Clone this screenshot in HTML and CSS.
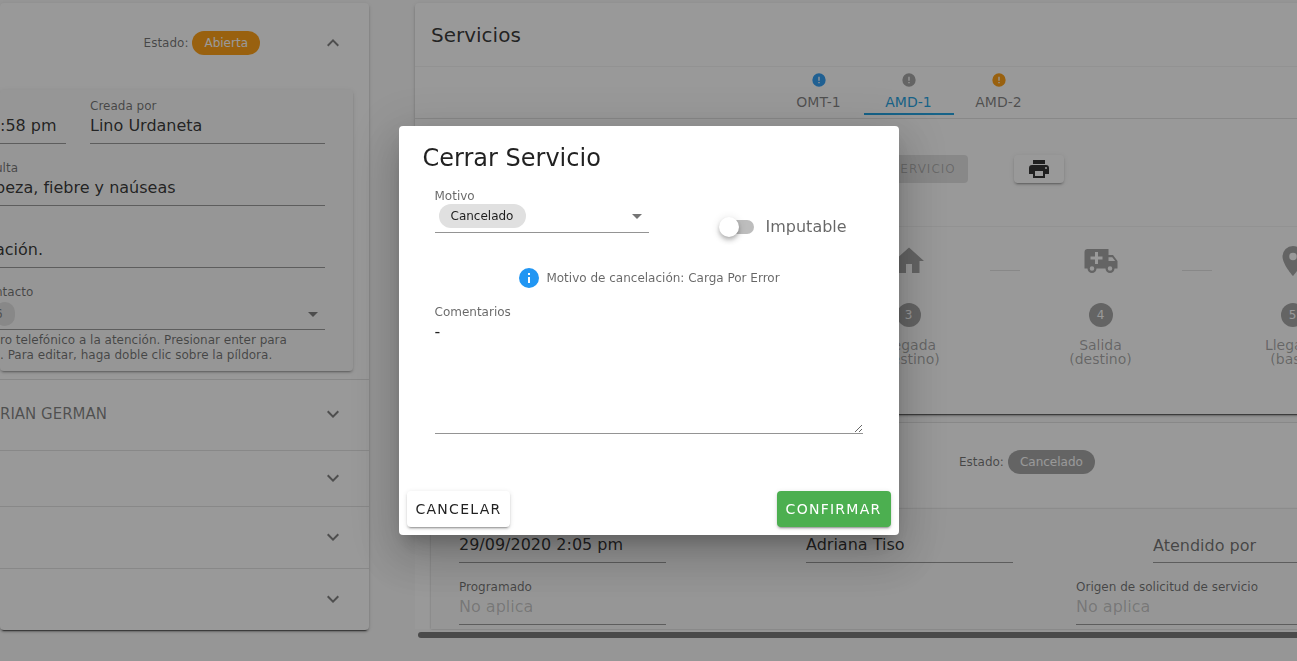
FILE: index.html
```html
<!DOCTYPE html>
<html lang="es">
<head>
<meta charset="utf-8">
<title>Cerrar Servicio</title>
<link rel="stylesheet" href="styles.css">
</head>
<body>
<svg class="sprite" aria-hidden="true">
  <symbol id="up" viewBox="0 0 24 24"><path d="M7.41,15.41L12,10.83L16.59,15.41L18,14L12,8L6,14L7.41,15.41Z"/></symbol>
  <symbol id="down" viewBox="0 0 24 24"><path d="M7.41,8.58L12,13.17L16.59,8.58L18,10L12,16L6,10L7.41,8.58Z"/></symbol>
  <symbol id="menu" viewBox="0 0 24 24"><path d="M7,10L12,15L17,10H7Z"/></symbol>
  <symbol id="alert" viewBox="0 0 24 24"><path d="M13,13H11V7H13M13,17H11V15H13M12,2A10,10 0 0,0 2,12A10,10 0 0,0 12,22A10,10 0 0,0 22,12A10,10 0 0,0 12,2Z"/></symbol>
  <symbol id="info" viewBox="0 0 24 24"><path d="M13,9H11V7H13M13,17H11V11H13M12,2A10,10 0 0,0 2,12A10,10 0 0,0 12,22A10,10 0 0,0 22,12A10,10 0 0,0 12,2Z"/></symbol>
  <symbol id="printer" viewBox="0 0 24 24"><path d="M18,3H6V7H18M19,12A1,1 0 0,1 18,11A1,1 0 0,1 19,10A1,1 0 0,1 20,11A1,1 0 0,1 19,12M16,19H8V14H16M19,8H5A3,3 0 0,0 2,11V17H6V21H18V17H22V11A3,3 0 0,0 19,8Z"/></symbol>
  <symbol id="home" viewBox="0 0 24 24"><path d="M10,20V14H14V20H19V12H22L12,3L2,12H5V20H10Z"/></symbol>
  <symbol id="ambulance" viewBox="0 0 24 24"><path d="M18,18.5A1.5,1.5 0 0,0 19.5,17A1.5,1.5 0 0,0 18,15.5A1.5,1.5 0 0,0 16.5,17A1.5,1.5 0 0,0 18,18.5M19.5,9.5H17V12H21.46L19.5,9.5M6,18.5A1.5,1.5 0 0,0 7.5,17A1.5,1.5 0 0,0 6,15.5A1.5,1.5 0 0,0 4.5,17A1.5,1.5 0 0,0 6,18.5M20,8L23,12V17H21A3,3 0 0,1 18,20A3,3 0 0,1 15,17H9A3,3 0 0,1 6,20A3,3 0 0,1 3,17H1V6C1,4.89 1.89,4 3,4H17V8H20M8,6V9H5V11H8V14H10V11H13V9H10V6H8Z"/></symbol>
  <symbol id="pin" viewBox="0 0 24 24"><path d="M12,11.5A2.5,2.5 0 0,1 9.5,9A2.5,2.5 0 0,1 12,6.5A2.5,2.5 0 0,1 14.5,9A2.5,2.5 0 0,1 12,11.5M12,2A7,7 0 0,0 5,9C5,14.25 12,22 12,22C12,22 19,14.25 19,9A7,7 0 0,0 12,2Z"/></symbol>
</svg>

<div class="page">
  <aside class="side card">
    <header class="side-head">
      <span class="state">Estado: <span class="chip chip-orange">Abierta</span></span>
      <button class="toggle" aria-label="Contraer"><svg class="icon"><use href="#up"/></svg></button>
    </header>
    <div class="details">
      <div class="pair">
        <div class="field">
          <label class="label" for="hora"></label>
          <input class="value" id="hora" aria-label="Hora" value=":58 pm" readonly>
        </div>
        <div class="field">
          <label class="label" for="creada">Creada por</label>
          <input class="value" id="creada" value="Lino Urdaneta" readonly>
        </div>
      </div>
      <div class="field bleed">
        <label class="label" for="consulta">ulta</label>
        <input class="value" id="consulta" value="beza, fiebre y naúseas" readonly>
      </div>
      <div class="field bleed">
        <label class="label" for="nota"></label>
        <input class="value" id="nota" aria-label="Atención" value="ación." readonly>
      </div>
      <div class="field bleed">
        <span class="label">ntacto</span>
        <div class="pick">
          <span class="chip chip-cut">6</span>
          <svg class="icon"><use href="#menu"/></svg>
        </div>
      </div>
      <p class="hint">ro telefónico a la atención. Presionar enter para<br>. Para editar, haga doble clic sobre la píldora.</p>
    </div>
    <button class="fold fold-tall"><span>RIAN GERMAN</span><svg class="icon"><use href="#down"/></svg></button>
    <button class="fold" aria-label="Expandir"><svg class="icon"><use href="#down"/></svg></button>
    <button class="fold fold-mid" aria-label="Expandir"><svg class="icon"><use href="#down"/></svg></button>
    <button class="fold fold-mid" aria-label="Expandir"><svg class="icon"><use href="#down"/></svg></button>
  </aside>

  <main class="main">
    <section class="card">
      <h2 class="section-title">Servicios</h2>
      <nav class="tabs">
        <button class="tab"><svg class="icon blue"><use href="#alert"/></svg>OMT-1</button>
        <button class="tab active"><svg class="icon grey"><use href="#alert"/></svg>AMD-1</button>
        <button class="tab"><svg class="icon orange"><use href="#alert"/></svg>AMD-2</button>
      </nav>
      <div class="tools">
        <button class="tool-close" disabled>CERRAR SERVICIO</button>
        <button class="tool-print" aria-label="Imprimir"><svg class="icon"><use href="#printer"/></svg></button>
      </div>
      <ol class="steps">
        <li class="step"></li>
        <li class="link"></li>
        <li class="step"></li>
        <li class="link"></li>
        <li class="step"><svg class="icon"><use href="#home"/></svg><span class="num">3</span><span>Llegada<br>(destino)</span></li>
        <li class="link"></li>
        <li class="step"><svg class="icon"><use href="#ambulance"/></svg><span class="num">4</span><span>Salida<br>(destino)</span></li>
        <li class="link"></li>
        <li class="step"><svg class="icon"><use href="#pin"/></svg><span class="num">5</span><span>Llegada<br>(base)</span></li>
      </ol>
    </section>
    <section class="service">
      <header class="service-head">
        <span class="state">Estado: <span class="chip chip-grey">Cancelado</span></span>
      </header>
      <div class="service-body">
        <div class="row">
          <div class="field short">
            <label class="label" for="fecha"></label>
            <input class="value" id="fecha" aria-label="Fecha" value="29/09/2020 2:05 pm" readonly>
          </div>
          <div class="field short">
            <label class="label" for="por"></label>
            <input class="value" id="por" aria-label="Creado por" value="Adriana Tiso" readonly>
          </div>
          <div class="field short">
            <label class="label"></label>
            <input class="value empty" aria-label="Atendido por" placeholder="Atendido por" readonly>
          </div>
        </div>
        <div class="row">
          <div class="field short">
            <label class="label" for="programado">Programado</label>
            <input class="value" id="programado" placeholder="No aplica" readonly>
          </div>
          <div class="field long">
            <label class="label" for="origen">Origen de solicitud de servicio</label>
            <input class="value" id="origen" placeholder="No aplica" readonly>
          </div>
        </div>
      </div>
    </section>
    <div class="scrollbar"></div>
  </main>
</div>

<div class="overlay">
  <form class="dialog" role="dialog" aria-labelledby="titulo">
    <h1 class="dialog-title" id="titulo">Cerrar Servicio</h1>
    <div class="dialog-body">
      <div class="choices">
        <div class="field motive">
          <label class="label" for="motivo">Motivo</label>
          <div class="pick">
            <select class="chip" id="motivo"><option>Cancelado</option></select>
            <svg class="icon"><use href="#menu"/></svg>
          </div>
        </div>
        <label class="switch"><input type="checkbox">Imputable</label>
      </div>
      <p class="notice"><svg class="icon"><use href="#info"/></svg>Motivo de cancelación: Carga Por Error</p>
      <div class="field">
        <label class="label" for="comentarios">Comentarios</label>
        <textarea class="comments" id="comentarios">-</textarea>
      </div>
    </div>
    <footer class="actions">
      <button class="btn" type="button">CANCELAR</button>
      <button class="btn btn-green" type="button">CONFIRMAR</button>
    </footer>
  </form>
</div>
</body>
</html>
```
FILE: styles.css
```css
* { box-sizing: border-box; }
body, h1, h2, p, ol { margin: 0; padding: 0; }
body {
  height: 100vh;
  overflow: hidden;
  background: #fafafa;
  color: rgba(0, 0, 0, .87);
  font: 16px/24px "DejaVu Sans", sans-serif;
}
button, input, select, textarea {
  margin: 0;
  padding: 0;
  border: 0;
  background: none;
  color: inherit;
  font: inherit;
  outline: 0;
}
.sprite { display: none; }
.icon {
  width: 24px;
  height: 24px;
  flex: none;
  fill: currentColor;
}

/* Page columns; the service column runs past the right edge */
.page {
  display: flex;
  align-items: flex-start;
  gap: 46px;
  width: calc(100% + 105px);
  padding-top: 3px;
}
.card {
  background: #fff;
  border-radius: 4px;
  box-shadow: 0 3px 1px -2px rgba(0, 0, 0, .6), 0 2px 2px rgba(0, 0, 0, .24), 0 1px 5px rgba(0, 0, 0, .12);
}
.side { flex: 0 0 369px; }
.side-head {
  display: flex;
  align-items: center;
  justify-content: flex-end;
  gap: 61px;
  height: 87px;
  padding: 0 24px 8px 0;
}
.toggle { height: 24px; color: rgba(0, 0, 0, .54); }
.state {
  display: flex;
  align-items: center;
  gap: 4px;
  font-size: 12px;
  color: rgba(0, 0, 0, .6);
}
.chip {
  height: 24px;
  padding: 0 12px;
  border-radius: 12px;
  background: #e0e0e0;
  font-size: 12px;
  line-height: 24px;
}
.chip-orange { background: #ff9800; color: #fff; }
.chip-grey { background: #9e9e9e; color: #fff; }
.chip-cut { color: rgba(0, 0, 0, .5); padding-left: 0; }

.details {
  display: flex;
  flex-direction: column;
  gap: 14px;
  margin: 0 16px 8px 0;
  padding: 6px 28px 8px 0;
  background: #fafafa;
  border-radius: 4px;
  box-shadow: 0 3px 1px -2px rgba(0, 0, 0, .2), 0 2px 2px rgba(0, 0, 0, .14), 0 1px 5px rgba(0, 0, 0, .12);
}
.pair {
  display: grid;
  grid-template-columns: 66px 1fr;
  gap: 24px;
}
.field { display: flex; flex-direction: column; min-width: 0; }
.bleed { margin-left: -5px; }
.label {
  height: 20px;
  font-size: 12px;
  line-height: 20px;
  color: rgba(0, 0, 0, .6);
}
.value {
  width: 100%;
  height: 28px;
  padding-bottom: 9px;
  border-bottom: 1px solid rgba(0, 0, 0, .42);
}
.value::placeholder { color: rgba(0, 0, 0, .24); }
.empty { padding-bottom: 6px; }
.empty::placeholder { color: rgba(0, 0, 0, .6); }
.pick {
  display: flex;
  align-items: flex-start;
  justify-content: space-between;
  height: 28px;
  border-bottom: 1px solid rgba(0, 0, 0, .42);
  color: rgba(0, 0, 0, .54);
}
.hint {
  margin-top: -11px;
  font-size: 12px;
  line-height: 15px;
  white-space: nowrap;
  color: rgba(0, 0, 0, .6);
}
.fold {
  display: flex;
  align-items: center;
  justify-content: flex-end;
  width: 100%;
  height: 56px;
  padding: 0 24px 2px 0;
  border-top: 1px solid rgba(0, 0, 0, .12);
  color: rgba(0, 0, 0, .54);
  font-size: 15px;
}
.fold span { margin-right: auto; }
.fold-tall { height: 71px; }
.fold-mid { height: 62px; }

/* Services */
.main { flex: 1; min-width: 0; }
.section-title {
  padding: 20px 16px 19px;
  font-size: 20px;
  font-weight: 400;
  border-bottom: 1px solid rgba(0, 0, 0, .05);
}
.tabs {
  display: flex;
  justify-content: center;
  height: 52px;
  border-bottom: 1px solid rgba(0, 0, 0, .12);
}
.tab {
  display: flex;
  flex-direction: column;
  align-items: center;
  gap: 2px;
  width: 90px;
  height: 48px;
  padding-top: 5px;
  color: rgba(0, 0, 0, .54);
  font-size: 14px;
}
.tab .icon { width: 16px; height: 16px; }
.active { color: #0f9be0; border-bottom: 2px solid; }
.blue { color: #2196f3; }
.grey { color: #9e9e9e; }
.orange { color: #ff9800; }
.tools {
  display: flex;
  justify-content: center;
  gap: 46px;
  height: 108px;
  padding: 36px 0 0 67px;
  border-bottom: 1px solid rgba(0, 0, 0, .05);
}
.tool-close, .tool-print {
  height: 28px;
  padding: 0 12px;
  border-radius: 4px;
  font-size: 12px;
}
.tool-close {
  background: rgba(0, 0, 0, .12);
  color: rgba(0, 0, 0, .26);
  letter-spacing: 1px;
}
.tool-print {
  display: flex;
  align-items: center;
  padding: 0 13px;
  box-shadow: 0 3px 1px -2px rgba(0, 0, 0, .2), 0 2px 2px rgba(0, 0, 0, .14), 0 1px 5px rgba(0, 0, 0, .12);
}
.steps {
  display: flex;
  justify-content: center;
  height: 187px;
  padding-top: 16px;
  list-style: none;
}
.step {
  display: flex;
  flex-direction: column;
  align-items: center;
  width: 162px;
  color: rgba(0, 0, 0, .38);
  font-size: 14px;
  line-height: 14px;
  text-align: center;
}
.step .icon { width: 36px; height: 36px; color: #9e9e9e; }
.link {
  width: 30px;
  height: 28px;
  border-bottom: 1px solid rgba(0, 0, 0, .12);
}
.num {
  width: 24px;
  margin: 24px 0 11px;
  border-radius: 12px;
  background: #9e9e9e;
  color: #fff;
  font-size: 12px;
  line-height: 24px;
}
.service {
  margin-top: 8px;
  background: #fff;
  border-top: 1px solid rgba(0, 0, 0, .12);
}
.service-head {
  display: flex;
  align-items: center;
  height: 86px;
  padding: 0 0 8px 544px;
}
.service-body {
  display: flex;
  flex-direction: column;
  gap: 14px;
  margin: 0 16px;
  padding: 6px 26px 4px 28px;
  background: #fafafa;
  box-shadow: 0 0 2px rgba(0, 0, 0, .3);
}
.row { display: flex; justify-content: space-between; }
.short { width: 207px; }
.long { width: 284px; }
.scrollbar {
  height: 6px;
  margin: 3px 0 0 3px;
  border-radius: 3px;
  background: #6d6d6d;
}

/* Dialog */
.overlay {
  position: fixed;
  inset: 0;
  display: flex;
  align-items: center;
  justify-content: center;
  background: rgba(33, 33, 33, .46);
}
.dialog {
  width: 500px;
  background: #fff;
  border-radius: 4px;
  box-shadow: 0 11px 15px -7px rgba(0, 0, 0, .2), 0 24px 38px 3px rgba(0, 0, 0, .14), 0 9px 46px 8px rgba(0, 0, 0, .12);
}
.dialog-title {
  padding: 16px 24px 12px;
  font-size: 24px;
  font-weight: 400;
  line-height: 32px;
}
.dialog-body { padding: 0 36px; }
.choices { display: flex; gap: 72px; }
.motive { width: 214px; }
.pick select { appearance: none; margin-left: 4px; color: rgba(0, 0, 0, .87); }
.choices .pick { height: 29px; }
.motive .label { height: 18px; line-height: 20px; }
.switch {
  display: flex;
  align-items: center;
  gap: 12px;
  height: 24px;
  margin-top: 29px;
  color: rgba(0, 0, 0, .6);
}
.switch input {
  appearance: none;
  display: flex;
  align-items: center;
  width: 33px;
  height: 14px;
  border-radius: 7px;
  background: #bdbdbd;
}
.switch input::before {
  content: "";
  width: 20px;
  height: 20px;
  margin-left: -2px;
  border-radius: 50%;
  background: #fff;
  box-shadow: 0 2px 4px -1px rgba(0, 0, 0, .2), 0 4px 5px rgba(0, 0, 0, .14), 0 1px 10px rgba(0, 0, 0, .12);
}
.notice {
  display: flex;
  align-items: center;
  justify-content: center;
  gap: 5px;
  margin: 27px 0 12px;
  font-size: 12px;
  color: rgba(0, 0, 0, .6);
}
.notice .icon { color: #2196f3; }
.comments {
  height: 112px;
  resize: vertical;
  border-bottom: 1px solid rgba(0, 0, 0, .42);
  line-height: 20px;
}
.actions {
  display: flex;
  justify-content: space-between;
  padding: 57px 8px 8px;
}
.btn {
  height: 36px;
  padding: 0 9px;
  border-radius: 4px;
  font-size: 14px;
  letter-spacing: .09em;
  box-shadow: 0 3px 1px -2px rgba(0, 0, 0, .2), 0 2px 2px rgba(0, 0, 0, .14), 0 1px 5px rgba(0, 0, 0, .12);
}
.btn-green { background: #4caf50; color: #fff; }
```
